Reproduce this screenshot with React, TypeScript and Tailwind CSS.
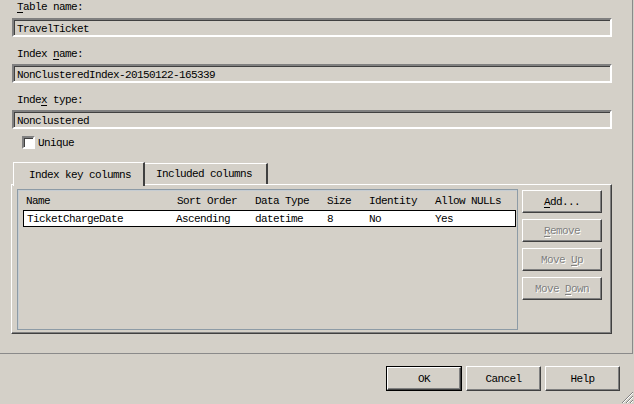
import React from 'react';

const sunken =
  'border-2 border-t-[#808080] border-l-[#808080] border-b-white border-r-white shadow-[inset_1px_1px_0_#404040]';
const raised =
  'border border-t-white border-l-white border-b-[#404040] border-r-[#404040] shadow-[inset_-1px_-1px_0_#808080]';

const Label: React.FC<{ children: React.ReactNode; className?: string }> = ({ children, className }) => (
  <div className={`h-[18px] pl-[5px] leading-[12px] ${className ?? ''}`}>{children}</div>
);

const TextBox: React.FC<{ value: string }> = ({ value }) => (
  <div className={`h-[19px] w-[600px] ${sunken} flex items-center pl-[3px] pt-[2px] leading-[12px]`}>{value}</div>
);

const SideButton: React.FC<{ children: React.ReactNode; disabled?: boolean }> = ({ children, disabled }) => (
  <div
    className={`h-[23px] w-[80px] ${raised} flex items-center justify-center leading-[12px] ${
      disabled ? 'text-[#808080] [text-shadow:1px_1px_0_#fff]' : ''
    }`}
  >
    <span>{children}</span>
  </div>
);

const columns = [
  { name: 'Name', w: 'w-[151px]' },
  { name: 'Sort Order', w: 'w-[78px]' },
  { name: 'Data Type', w: 'w-[72px]' },
  { name: 'Size', w: 'w-[42px]' },
  { name: 'Identity', w: 'w-[66px]' },
  { name: 'Allow NULLs', w: 'w-[80px]' },
];
const row = ['TicketChargeDate', 'Ascending', 'datetime', '8', 'No', 'Yes'];

export default function App() {
  return (
    <div className="relative w-[634px] h-[404px] overflow-hidden bg-[#d4d0c8] text-black text-[11px] tracking-[-0.6px] font-['Liberation_Mono','DejaVu_Sans_Mono',monospace]">
      {/* upper pane */}
      <div className="w-[633px] h-[354px] border-r border-b border-[#8a8a8a] pl-[12px]">
        <Label className="pt-[1px]">
          <u className="underline-offset-2">T</u>able name:
        </Label>
        <TextBox value="TravelTicket" />
        <Label className="mt-[9px] pt-[2px]">
          Index <u className="underline-offset-2">n</u>ame:
        </Label>
        <TextBox value="NonClusteredIndex-20150122-165339" />
        <Label className="mt-[9px] pt-[2px]">
          Inde<u className="underline-offset-2">x</u> type:
        </Label>
        <TextBox value="Nonclustered" />

        <div className="mt-[7px] flex items-center h-[13px] pl-[10px]">
          <div className={`w-[13px] h-[13px] bg-white ${sunken}`} />
          <span className="ml-[3px] leading-[12px]">Unique</span>
        </div>

        {/* tabs */}
        <div className="mt-[13px] ml-[-1px] flex items-end h-[22px] pl-[2px] relative z-10">
          <div className="h-[24px] w-[132px] mb-[-2px] bg-[#d4d0c8] border-l border-t border-white border-r-2 border-r-[#404040] flex items-center pl-[15px] leading-[12px]">
            Index key columns
          </div>
          <div className="h-[21px] w-[123px] border-t border-white border-r-2 border-r-[#404040] flex items-center pl-[11px] leading-[12px]">
            Included columns
          </div>
        </div>
        <div className="ml-[-1px] w-[601px] h-[150px] border-l border-t border-white border-r border-b border-r-[#404040] border-b-[#404040] shadow-[inset_-1px_-1px_0_#808080] flex pt-[4px] pl-[5px] gap-[4px]">
          {/* grid */}
          <div className="w-[501px] h-[141px] border border-[#8d9ba6] shadow-[inset_1px_1px_0_#c5ccd2]">
            <div className="flex h-[20px] items-center pl-[8px] pt-[1px] leading-[12px]">
              {columns.map((c) => (
                <div key={c.name} className={`${c.w} shrink-0`}>
                  {c.name}
                </div>
              ))}
            </div>
            <div className="ml-[5px] w-[493px] h-[17px] bg-white border border-black flex items-center leading-[12px] pl-[3px]">
              {row.map((v, i) => (
                <div key={i} className={`${columns[i].w} shrink-0 ${i === 1 ? 'ml-[-2px] mr-[1px]' : ''}`}>
                  {v}
                </div>
              ))}
            </div>
          </div>
          {/* side buttons */}
          <div className="flex flex-col gap-[6px] pt-[1px]">
            <SideButton>
              <u className="underline-offset-2">A</u>dd...
            </SideButton>
            <SideButton disabled>
              <u className="underline-offset-2">R</u>emove
            </SideButton>
            <SideButton disabled>
              Move <u className="underline-offset-2">U</u>p
            </SideButton>
            <SideButton disabled>
              Move <u className="underline-offset-2">D</u>own
            </SideButton>
          </div>
        </div>
      </div>

      {/* dialog buttons */}
      <div className="flex justify-end gap-[4px] pr-[14px] mt-[12px]">
        <div className="h-[25px] w-[76px] border border-black">
          <div className={`h-full w-full ${raised} flex items-center justify-center leading-[12px]`}>OK</div>
        </div>
        <div className={`h-[25px] w-[75px] ${raised} flex items-center justify-center leading-[12px]`}>Cancel</div>
        <div className={`h-[25px] w-[75px] ${raised} flex items-center justify-center leading-[12px]`}>Help</div>
      </div>

      {/* size grip */}
      <svg className="absolute right-0 bottom-0" width="13" height="13" viewBox="0 0 13 13">
        <path d="M12 1 L1 12 M12 5 L5 12 M12 9 L9 12" stroke="#808080" strokeWidth="1" />
        <path d="M12 2 L2 12 M12 6 L6 12 M12 10 L10 12" stroke="#ffffff" strokeWidth="1" />
      </svg>
    </div>
  );
}
